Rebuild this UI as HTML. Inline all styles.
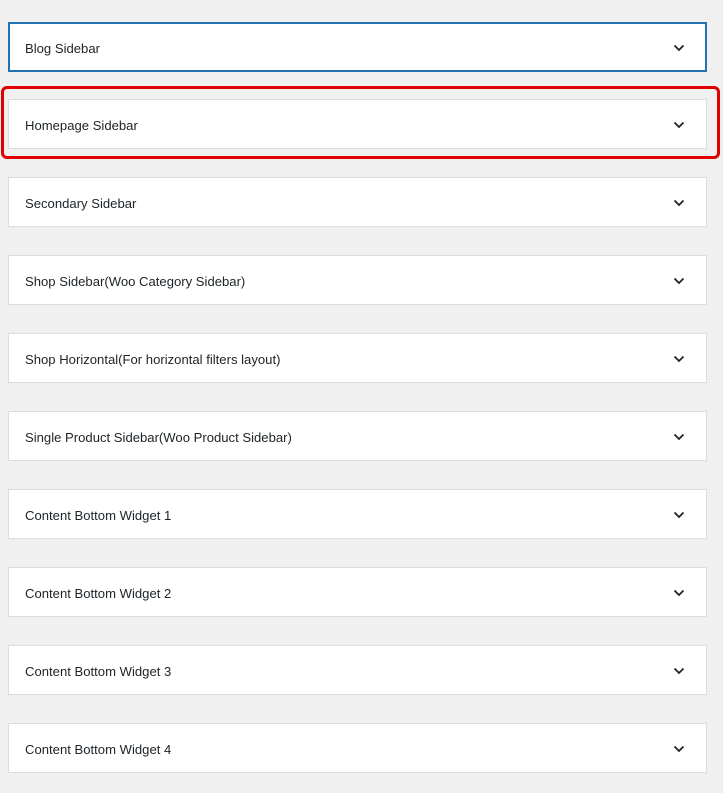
<!DOCTYPE html><html><head><style>
body{margin:0;background:#f0f0f1;width:723px;height:793px;position:relative;font-family:"Liberation Sans",sans-serif;overflow:hidden}
.b{position:absolute;left:8px;width:697px;height:48px;background:#fff;border:1px solid #dcdcde;box-sizing:content-box}
.b span{position:absolute;left:16px;top:2px;line-height:48px;font-size:13.1px;color:#1d2327}
.b svg{position:absolute;left:664px;top:21px}
.blue{border:2px solid #2271b1;left:8px;width:695px;height:46px}
.blue span{left:15px;line-height:46px}
.blue svg{left:663px;top:20px}
.red{position:absolute;left:1px;top:86px;width:713px;height:67px;border:3px solid #e00000;border-radius:6px}
</style></head><body>
<div class="b blue" style="top:22px"><span>Blog Sidebar</span><svg width="12" height="8"><path d="M1.5 1.5L6 6L10.5 1.5" stroke="#1d2327" stroke-width="1.8" fill="none"/></svg></div>
<div class="red"></div>
<div class="b" style="top:99px"><span>Homepage Sidebar</span><svg width="12" height="8"><path d="M1.5 1.5L6 6L10.5 1.5" stroke="#1d2327" stroke-width="1.8" fill="none"/></svg></div>
<div class="b" style="top:177px"><span>Secondary Sidebar</span><svg width="12" height="8"><path d="M1.5 1.5L6 6L10.5 1.5" stroke="#1d2327" stroke-width="1.8" fill="none"/></svg></div>
<div class="b" style="top:255px"><span>Shop Sidebar(Woo Category Sidebar)</span><svg width="12" height="8"><path d="M1.5 1.5L6 6L10.5 1.5" stroke="#1d2327" stroke-width="1.8" fill="none"/></svg></div>
<div class="b" style="top:333px"><span>Shop Horizontal(For horizontal filters layout)</span><svg width="12" height="8"><path d="M1.5 1.5L6 6L10.5 1.5" stroke="#1d2327" stroke-width="1.8" fill="none"/></svg></div>
<div class="b" style="top:411px"><span>Single Product Sidebar(Woo Product Sidebar)</span><svg width="12" height="8"><path d="M1.5 1.5L6 6L10.5 1.5" stroke="#1d2327" stroke-width="1.8" fill="none"/></svg></div>
<div class="b" style="top:489px"><span>Content Bottom Widget 1</span><svg width="12" height="8"><path d="M1.5 1.5L6 6L10.5 1.5" stroke="#1d2327" stroke-width="1.8" fill="none"/></svg></div>
<div class="b" style="top:567px"><span>Content Bottom Widget 2</span><svg width="12" height="8"><path d="M1.5 1.5L6 6L10.5 1.5" stroke="#1d2327" stroke-width="1.8" fill="none"/></svg></div>
<div class="b" style="top:645px"><span>Content Bottom Widget 3</span><svg width="12" height="8"><path d="M1.5 1.5L6 6L10.5 1.5" stroke="#1d2327" stroke-width="1.8" fill="none"/></svg></div>
<div class="b" style="top:723px"><span>Content Bottom Widget 4</span><svg width="12" height="8"><path d="M1.5 1.5L6 6L10.5 1.5" stroke="#1d2327" stroke-width="1.8" fill="none"/></svg></div>
</body></html>
